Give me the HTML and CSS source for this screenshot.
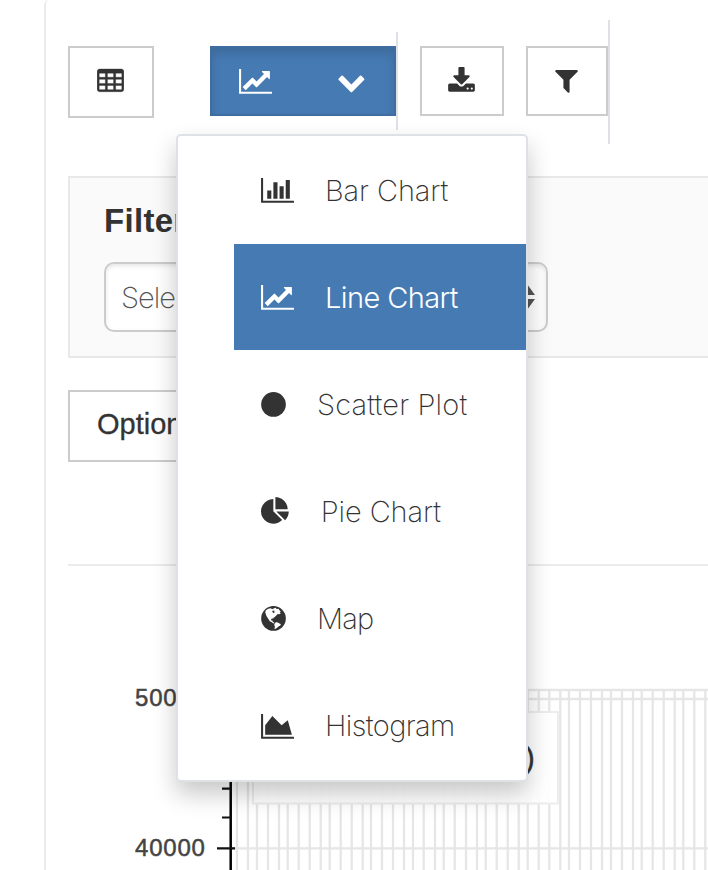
FILE: index.html
```html
<!DOCTYPE html>
<html lang="en">
<head>
<meta charset="utf-8">
<title>Chart explorer</title>
<link rel="stylesheet" href="styles.css">
</head>
<body>
<svg class="defs" aria-hidden="true">
  <symbol id="line-chart" viewBox="0 0 2048 1792"><path d="M2048 1536v128h-2048v-1536h128v1408h1920zm-128-1248v435q0 21-19.5 29.5t-35.500-7.500l-121-121-633 633q-10 10-23 10t-23-10l-233-233-416 416-192-192 585-585q10-10 23-10t23 10l233 233 464-464-121-121q-16-16-7.500-35.500t29.500-19.500h435q14 0 23 9t9 23z"/></symbol>
  <symbol id="bar-chart" viewBox="0 0 2048 1792"><path d="M640 896v512h-256v-512h256zm384-512v1024h-256v-1024h256zm1024 1152v128h-2048v-1536h128v1408h1920zm-640-896v768h-256v-768h256zm384-384v1152h-256v-1152h256z"/></symbol>
  <symbol id="area-chart" viewBox="0 0 2048 1792"><path d="M2048 1536v128h-2048v-1536h128v1408h1920zm-384-1024l256 896h-1664v-576l448-576 576 576z"/></symbol>
  <symbol id="pie-chart" viewBox="0 0 1792 1792"><path d="M768 890l546 546q-106 108-247.500 168t-298.500 60q-209 0-385.500-103t-279.500-279.500-103-385.500 103-385.500 279.500-279.500 385.500-103v762zm187 6h773q0 157-60 298.500t-168 247.500zm709-128h-768v-768q209 0 385.500 103t279.500 279.500 103 385.500z"/></symbol>
  <symbol id="circle" viewBox="0 0 1536 1792"><circle cx="768" cy="896" r="768"/></symbol>
  <symbol id="globe" viewBox="0 0 1536 1792"><circle cx="768" cy="896" r="768"/><path class="land" d="M300 390L430 300 600 270 690 330 810 270 900 235 960 310 1080 300 1140 390 1220 460 1150 530 1230 580 1130 640 1030 620 960 700 900 740 850 820 790 830 760 910 690 900 620 930 630 1030 720 1040 720 1110 790 1140 810 1220 750 1200 640 1120 540 1080 470 970 400 860 330 740 290 620 250 520ZM860 1170L950 1130 1080 1160 1160 1230 1230 1250 1190 1340 1080 1400 1010 1470 900 1540 820 1560 860 1420 810 1310Z"/><path d="M690 430L780 400 860 430 790 480 850 550 760 560 700 500Z"/></symbol>
  <symbol id="table" viewBox="0 0 1664 1792"><path class="table-shape" fill-rule="evenodd" d="M160 128h1344q66 0 113 47t47 113v1088q0 66-47 113t-113 47h-1344q-66 0-113-47t-47-113v-1088q0-66 47-113t113-47zM160 384h320q32 0 32 32v192q0 32-32 32h-320q-32 0-32-32v-192q0-32 32-32zM672 384h320q32 0 32 32v192q0 32-32 32h-320q-32 0-32-32v-192q0-32 32-32zM1184 384h320q32 0 32 32v192q0 32-32 32h-320q-32 0-32-32v-192q0-32 32-32zM160 768h320q32 0 32 32v192q0 32-32 32h-320q-32 0-32-32v-192q0-32 32-32zM672 768h320q32 0 32 32v192q0 32-32 32h-320q-32 0-32-32v-192q0-32 32-32zM1184 768h320q32 0 32 32v192q0 32-32 32h-320q-32 0-32-32v-192q0-32 32-32zM160 1152h320q32 0 32 32v192q0 32-32 32h-320q-32 0-32-32v-192q0-32 32-32zM672 1152h320q32 0 32 32v192q0 32-32 32h-320q-32 0-32-32v-192q0-32 32-32zM1184 1152h320q32 0 32 32v192q0 32-32 32h-320q-32 0-32-32v-192q0-32 32-32z"/></symbol>
  <symbol id="download" viewBox="64 0 1664 1792"><path fill-rule="evenodd" d="M1344 1344q0-26-19-45t-45-19-45 19-19 45 19 45 45 19 45-19 19-45zm256 0q0-26-19-45t-45-19-45 19-19 45 19 45 45 19 45-19 19-45zm128-224v320q0 40-28 68t-68 28h-1472q-40 0-68-28t-28-68v-320q0-40 28-68t68-28h465l135 136q58 56 136 56t136-56l136-136h464q40 0 68 28t28 68zm-325-569q17 41-14 70l-448 448q-18 19-45 19t-45-19l-448-448q-31-29-14-70 17-39 59-39h256v-448q0-26 19-45t45-19h256q26 0 45 19t19 45v448h256q42 0 59 39z"/></symbol>
  <symbol id="filter" viewBox="192 0 1408 1792"><path d="M1595 295q17 41-14 70l-493 493v742q0 42-39 59-13 5-25 5-27 0-45-19l-256-256q-19-19-19-45v-486l-493-493q-31-29-14-70 17-39 59-39h1280q42 0 59 39z"/></symbol>
  <symbol id="chevron" viewBox="0 0 1792 1792"><path d="M1683 808l-742 741q-19 19-45 19t-45-19l-742-741q-19-19-19-45.500t19-45.500l166-165q19-19 45-19t45 19l531 531 531-531q19-19 45-19t45 19l166 165q19 19 19 45.500t-19 45.500z"/></symbol>
</svg>
<main class="panel">
  <div class="toolbar">
    <button class="btn btn-table"><svg class="icon w-table"><use href="#table"/></svg></button>
    <div class="group group-chart">
      <div class="btn-chart">
        <svg class="icon w-chart"><use href="#line-chart"/></svg>
        <svg class="icon chevron"><use href="#chevron"/></svg>
      </div>
      <ul class="menu">
        <li class="item"><svg class="icon w-chart"><use href="#bar-chart"/></svg><span class="bar-label">Bar Chart</span></li>
        <li class="item active"><svg class="icon w-chart"><use href="#line-chart"/></svg><span class="line-label">Line Chart</span></li>
        <li class="item"><svg class="icon w-round"><use href="#circle"/></svg><span class="scatter-label">Scatter Plot</span></li>
        <li class="item"><svg class="icon w-pie"><use href="#pie-chart"/></svg><span class="bar-label">Pie Chart</span></li>
        <li class="item"><svg class="icon w-round"><use href="#globe"/></svg><span class="map-label">Map</span></li>
        <li class="item"><svg class="icon w-chart"><use href="#area-chart"/></svg><span class="histogram-label">Histogram</span></li>
      </ul>
    </div>
    <button class="btn btn-download"><svg class="icon w-table"><use href="#download"/></svg></button>
    <div class="group group-filter">
      <button class="btn btn-filter"><svg class="icon w-filter"><use href="#filter"/></svg></button>
    </div>
  </div>
  <section class="filters">
    <h2 class="filters-title">Filters</h2>
    <div class="select"><span class="select-label">Select</span>
      <svg class="arrows" viewBox="0 0 16 26"><path d="M8 0l8 11H0zM8 26l8-11H0z"/></svg>
    </div>
  </section>
  <button class="options">Options</button>
  <hr class="rule">
  <svg class="chart" viewBox="68 566 640 304" id="chart">
    <g class="grid" id="grid"></g>
    <rect class="legend" x="253" y="712" width="305" height="91.500"/>
    <text class="legend-text" x="525" y="767.500">)</text>
    <path class="axis" d="M230.700 690V870"/>
    <path class="ticks" d="M217 698.500H235M222 728.500H231M222 758.500H231M222 788.700H231M222 817.500H231M217 848.300H235"/>
    <text class="tick-label" x="135" y="706">50000</text>
    <text class="tick-label" x="135" y="856">40000</text>
  </svg>
</main>
<script src="chart.js"></script>
</body>
</html>
```
FILE: styles.css
```css
* { box-sizing: border-box; }
body {
  margin: 0;
  height: 870px;
  overflow: hidden;
  background: #fff;
  color: #333;
  font-family: "Liberation Sans", Arial, sans-serif;
}
.defs { position: absolute; width: 0; height: 0; }
.panel {
  margin-left: 44px;
  height: 870px;
  padding: 20px 0 0 22px;
  border-left: 2px solid #ebebeb;
  border-top-left-radius: 5px;
  background: #fff;
}
button { font: inherit; color: inherit; margin: 0; padding: 0; }
.icon { display: block; flex: none; height: 28.8px; fill: currentColor; }
.w-chart { width: 33px; }
.w-round { width: 25px; }
.w-pie { width: 28.8px; }
.w-table { width: 27px; }
.w-filter { width: 23px; }

.toolbar { display: flex; align-items: flex-start; height: 156px; }
.btn {
  display: flex;
  align-items: center;
  justify-content: center;
  height: 70px;
  border: 2px solid #ccc;
  background: #fff;
}
.btn-table { width: 86px; height: 72px; margin-top: 26px; }
.btn-table .icon { margin-right: 2px; margin-bottom: 1px; }
.table-shape { stroke: currentColor; stroke-width: 24; }
.btn-download { width: 84px; margin: 26px 22px 0; }
.btn-download .icon { margin-top: 1px; margin-right: 2px; }
.btn-filter { width: 82px; }
.btn-filter .icon { margin-left: -1px; margin-bottom: 1px; }
.group { position: relative; border-right: 2px solid #dee2e6; }
.group-chart { margin: 12px 0 0 56px; padding: 14px 0; height: 98px; }
.group-filter { padding: 26px 0 28px; height: 124px; }
.btn-chart {
  display: flex;
  align-items: center;
  gap: 65px;
  width: 186px;
  height: 70px;
  padding: 0 30px 0 27px;
  border: 2px solid #406d9f;
  background: #467ab3;
  color: #fff;
  box-shadow: inset 0 6px 10px rgba(0, 0, 0, .125);
}
.chevron { width: 28.8px; }

.menu {
  position: absolute;
  z-index: 2;
  top: 102px;
  left: -34px;
  width: 352px;
  height: 648px;
  margin: 0;
  padding: 1px 0 0 56px;
  display: flex;
  flex-direction: column;
  gap: 1.200px;
  list-style: none;
  border: 2px solid #dee2e6;
  border-radius: 5px;
  background: #fff;
  box-shadow: 0 12px 24px rgba(0, 0, 0, .22);
}
.item {
  display: flex;
  align-items: center;
  gap: 31px;
  height: 106px;
  padding-left: 27px;
  font: 200 29px/40px Inter, sans-serif;
  white-space: nowrap;
}
.item span { padding-top: 1px; }
.item.active { background: #467ab3; color: #fff; font-weight: 300; }
.bar-label { letter-spacing: -.1px; }
.line-label { letter-spacing: -.6px; }
.scatter-label { letter-spacing: .15px; }
.map-label { letter-spacing: -.8px; }
.histogram-label { letter-spacing: -.6px; }
.land { fill: #fff; }

.filters {
  height: 182px;
  padding: 25px 0 0 34px;
  border: 2px solid #e8e8e8;
  border-right: 0;
  background: #fafafa;
}
.filters-title { margin: 0 0 23px; font-size: 33px; line-height: 36px; letter-spacing: .3px; }
.select {
  display: flex;
  align-items: center;
  justify-content: space-between;
  width: 444px;
  height: 70px;
  padding: 0 11px 0 15px;
  border: 2px solid #ccc;
  border-radius: 10px;
  background: #fff;
  box-shadow: inset 0 2px 4px rgba(0, 0, 0, .1);
  color: #555;
  font: 200 29px/40px Inter, sans-serif;
  letter-spacing: -1px;
}
.select-label { padding-top: 2px; }
.arrows { width: 16px; height: 26px; fill: #555; }
.options {
  display: block;
  width: 156px;
  height: 72px;
  margin-top: 32px;
  padding: 0 0 4px 27px;
  border: 2px solid #ccc;
  background: #fff;
  font-size: 29px;
  text-align: left;
  -webkit-text-stroke: .3px #333;
}
.rule { height: 2px; margin: 102px 0 0; border: 0; background: #ebebeb; }
.chart { display: block; width: 640px; height: 304px; }
.grid { stroke: #e6e6e6; stroke-width: 2.300; }
.legend { fill: #fff; fill-opacity: .93; stroke: #ededed; stroke-width: 2; }
.legend-text { font-size: 29px; fill: #333; stroke: #333; stroke-width: .5; }
.axis { stroke: #000; stroke-width: 2.500; }
.ticks { fill: none; stroke: #111; stroke-width: 2.200; }
.tick-label { font-size: 24px; fill: #444; stroke: #444; stroke-width: .5; letter-spacing: .8px; }
```
FILE: chart.js
```js
const xs = [237, 248, 257, 268, 279, 287.7, 298.7, 309.7, 320.7, 329.7, 340.7, 351.7,
  362.7, 371, 382, 393, 404, 413, 423.7, 435, 443.7, 454.7, 466, 477, 485.7, 496.7,
  507.7, 518.7, 527.7, 538.7, 549.3, 560.3, 569, 580, 591, 602, 611, 622, 633, 641.7,
  652.7, 663.7, 674.7, 683.3, 694.3, 705.3];
const path = document.createElementNS("http://www.w3.org/2000/svg", "path");
path.setAttribute("d", xs.map(x => `M${x} 690V870`).join("") +
  [690, 699, 848.3].map(y => `M232 ${y}H708`).join(""));
document.getElementById("grid").append(path);
```
